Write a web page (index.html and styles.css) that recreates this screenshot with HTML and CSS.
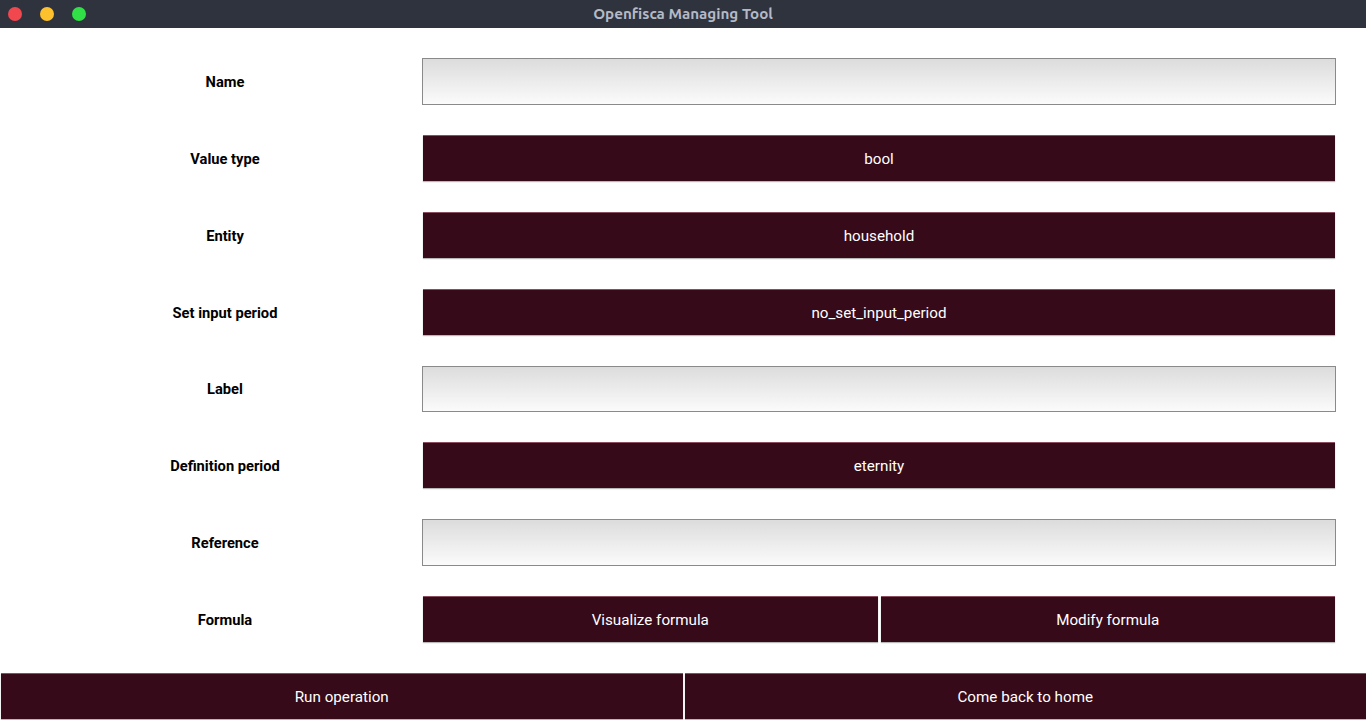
FILE: index.html
```html
<!DOCTYPE html>
<html>
<head>
<meta charset="utf-8">
<link rel="stylesheet" href="styles.css">
</head>
<body>
<div class="titlebar">
  <div class="dots">
    <span class="dot red"></span>
    <span class="dot yellow"></span>
    <span class="dot green"></span>
  </div>
  <div class="title">Openfisca Managing Tool</div>
</div>
<div class="form">
  <div class="row"><div class="label">Name</div><div class="field"><div class="input"></div></div></div>
  <div class="row"><div class="label">Value type</div><div class="field"><div class="btn">bool</div></div></div>
  <div class="row"><div class="label">Entity</div><div class="field"><div class="btn">household</div></div></div>
  <div class="row"><div class="label">Set input period</div><div class="field"><div class="btn">no_set_input_period</div></div></div>
  <div class="row"><div class="label">Label</div><div class="field"><div class="input"></div></div></div>
  <div class="row"><div class="label">Definition period</div><div class="field"><div class="btn">eternity</div></div></div>
  <div class="row"><div class="label">Reference</div><div class="field"><div class="input"></div></div></div>
  <div class="row"><div class="label">Formula</div><div class="field split"><div class="btn">Visualize formula</div><div class="btn">Modify formula</div></div></div>
</div>
<div class="bottom">
  <div class="btn">Run operation</div>
  <div class="btn">Come back to home</div>
</div>
</body>
</html>
```
FILE: styles.css
```css
html, body {
  margin: 0;
  padding: 0;
  background: #ffffff;
  font-family: Roboto, "Liberation Sans", sans-serif;
  width: 1366px;
  height: 720px;
  overflow: hidden;
}
.titlebar {
  height: 28px;
  background: #2f333e;
  display: flex;
  align-items: center;
  position: relative;
}
.dots {
  display: flex;
  gap: 18px;
  padding-left: 8px;
}
.dot {
  width: 14px;
  height: 14px;
  border-radius: 50%;
  display: block;
}
.red { background: #f1474f; }
.yellow { background: #fcc12d; }
.green { background: #31e046; }
.title {
  position: absolute;
  left: 0;
  right: 0;
  top: 0;
  height: 28px;
  line-height: 28px;
  text-align: center;
  color: #b3bac6;
  font-family: Ubuntu, "DejaVu Sans", sans-serif;
  font-weight: bold;
  font-size: 15.2px;
}
.form {
  padding: 30px 30px 0 0;
  display: flex;
  flex-direction: column;
  gap: 30px;
}
.row {
  display: flex;
  height: 46.875px;
  align-items: center;
}
.label {
  width: 394px;
  padding-left: 28px;
  padding-top: 1px;
  text-align: center;
  font-weight: bold;
  font-size: 14.7px;
  color: #000;
}
.field {
  flex: 1;
  height: 100%;
  display: flex;
}
.field .btn {
  margin: 0 1px;
}
.split {
  gap: 1px;
}
.input {
  flex: 1;
  border: 1px solid #8a8a8a;
  background: linear-gradient(#dcdcdc, #fbfbfb);
}
.btn {
  flex: 1;
  background: #360a18;
  border-top: 1px solid #8b4e5e;
  box-shadow: 0 1px 1px #b8b8b8;
  color: #ffffff;
  font-size: 15.2px;
  display: flex;
  align-items: center;
  justify-content: center;
  padding-top: 1px;
  box-sizing: border-box;
  height: 46px;
}
.bottom {
  margin-top: 30px;
  display: flex;
  gap: 2px;
  padding-left: 1px;
}
```
